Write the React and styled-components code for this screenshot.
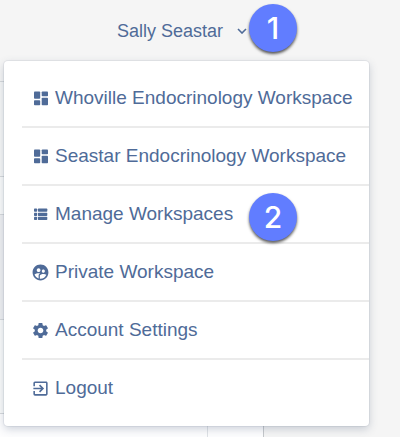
import styled, { createGlobalStyle } from "styled-components";
import { MdSupervisedUserCircle, MdSettings, MdExitToApp } from "react-icons/md";

const links = [
  { label: "Whoville Endocrinology Workspace", icon: DashboardIcon },
  { label: "Seastar Endocrinology Workspace", icon: DashboardIcon },
  { label: "Manage Workspaces", icon: ListIcon, step: 2 },
  { label: "Private Workspace", icon: MdSupervisedUserCircle },
  { label: "Account Settings", icon: MdSettings },
  { label: "Logout", icon: MdExitToApp },
];

export default function App() {
  return (
    <>
      <GlobalStyle />
      <Page>
        <Header>
          <UserButton type="button" aria-expanded="true">
            Sally Seastar
            <Chevron viewBox="0 0 10 6" aria-hidden="true">
              <path d="M1 1l4 4 4-4" />
            </Chevron>
          </UserButton>
          <Badge>1</Badge>
        </Header>
        <Menu>
          {links.map(({ label, icon: Icon, step }) => (
            <MenuItem key={label}>
              <MenuLink href="#">
                <Icon size={19} aria-hidden="true" />
                {label}
              </MenuLink>
              {step && <StepBadge>{step}</StepBadge>}
            </MenuItem>
          ))}
        </Menu>
        <Backdrop aria-hidden="true">
          <Band height="95px" bg="#f5f6f6" />
          <Band height="38px" bg="#f9fafa" />
          <Band height="105px" bg="#eeeff1" />
          <Band height="94px" bg="#f9fafa" />
          <Band height="24px" bg="#fdfdfe">
            <Cell />
          </Band>
        </Backdrop>
      </Page>
    </>
  );
}

function DashboardIcon({ size }) {
  return (
    <svg width={size} height={size} viewBox="0 0 19 19" fill="currentColor" aria-hidden="true">
      <rect x="3" y="2.5" width="6.2" height="7.2" rx="0.8" />
      <rect x="3" y="11.2" width="6.2" height="5" rx="0.8" />
      <rect x="10.7" y="2.5" width="6.3" height="4.8" rx="0.8" />
      <rect x="10.7" y="8.8" width="6.3" height="7.4" rx="0.8" />
    </svg>
  );
}

function ListIcon({ size }) {
  return (
    <svg width={size} height={size} viewBox="0 0 19 19" fill="currentColor" aria-hidden="true">
      {[3.6, 7.7, 11.8].map((y) => (
        <g key={y}>
          <rect x="3" y={y} width="3.1" height="3.2" rx="0.7" />
          <rect x="6.9" y={y} width="9.4" height="3.2" rx="0.7" />
        </g>
      ))}
    </svg>
  );
}

const GlobalStyle = createGlobalStyle`
  * {
    box-sizing: border-box;
  }
  body {
    margin: 0;
    background: #f5f5f5;
    color: #4f6b98;
    font-family: "Liberation Sans", Arial, sans-serif;
    font-size: 19px;
  }
`;
const Page = styled.div`
  position: relative;
  min-height: 100vh;
  overflow: hidden;
`;
const Header = styled.header`
  height: 81px;
  padding: 4px 103px 0 0;
  display: flex;
  align-items: flex-start;
  justify-content: flex-end;
  gap: 2px;
`;
const UserButton = styled.button`
  height: 54px;
  padding: 0;
  border: none;
  background: none;
  display: flex;
  align-items: center;
  gap: 14px;
  color: inherit;
  font: inherit;
  font-size: 18px;
  cursor: pointer;
`;
const Chevron = styled.svg`
  width: 10px;
  height: 6px;
  fill: none;
  stroke: currentColor;
  stroke-width: 1.6;
`;
const Badge = styled.span`
  width: 48px;
  height: 48px;
  border-radius: 50%;
  background: #617dff;
  box-shadow: 0 2px 3px rgba(0, 0, 0, 0.65);
  display: flex;
  align-items: center;
  justify-content: center;
  color: white;
  font-family: "Inter", "Liberation Sans", sans-serif;
  font-size: 30px;
  font-weight: 500;
`;
const StepBadge = styled(Badge)`
  position: absolute;
  z-index: 1;
  right: 72px;
  top: 7px;
`;
const Menu = styled.ul`
  position: absolute;
  top: 61px;
  left: 4px;
  right: 31px;
  margin: 0;
  padding: 9px 0 10px 18px;
  border-radius: 4px;
  background: white;
  box-shadow: 0 0 0 1px rgba(80, 95, 110, 0.08), 0 3px 8px rgba(60, 80, 110, 0.25);
  list-style: none;
`;
const MenuItem = styled.li`
  position: relative;
  & + & {
    border-top: 2px solid #ebebeb;
  }
`;
const MenuLink = styled.a`
  height: 56px;
  padding-left: 9px;
  display: flex;
  align-items: center;
  gap: 5px;
  color: inherit;
  text-decoration: none;
  white-space: nowrap;
`;
const Backdrop = styled.div`
  width: 66%;
  border-right: 1px solid #c5c8cb;
`;
const Band = styled.div`
  height: ${({ height }) => height};
  background: ${({ bg }) => bg};
  border-top: 1px solid #d5d8db;
  display: flex;
`;
const Cell = styled.div`
  width: 79%;
  border-right: 1px solid #dfe2e6;
`;
